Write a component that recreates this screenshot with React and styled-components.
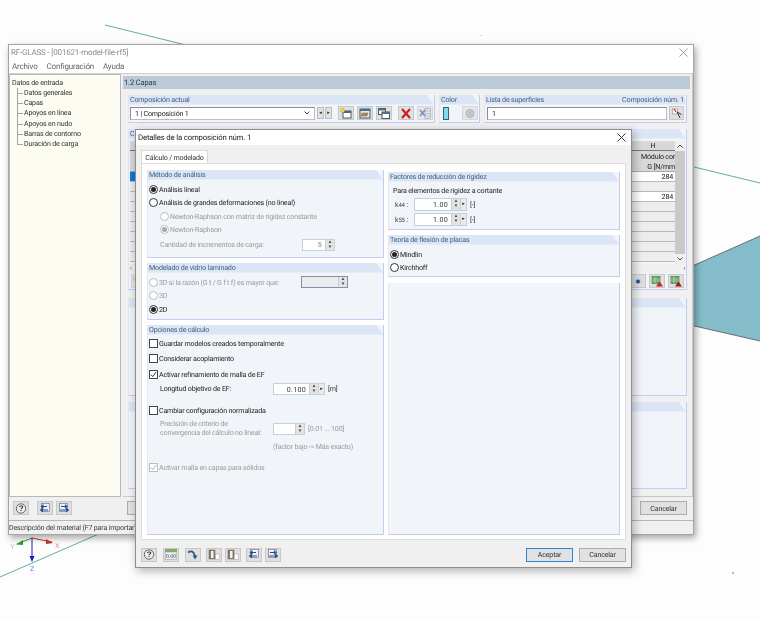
import styled, { createGlobalStyle } from 'styled-components';

const GlobalStyle = createGlobalStyle`
  html, body {
    margin: 0;
    padding: 0;
    background: #fdfdfd;
  }
  * {
    box-sizing: border-box;
  }
`;

const Stage = styled.div`
  position: relative;
  width: 760px;
  height: 620px;
  overflow: hidden;
  background: #fdfdfd;
  font-family: Roboto, 'Liberation Sans', Arial, sans-serif;
  font-size: 7.1px;
  letter-spacing: -0.18px;
  text-rendering: geometricPrecision;
  color: #222;
  filter: blur(0.35px);
`;

const Backdrop = styled.svg`
  position: absolute;
  inset: 0;
`;

const MainWindow = styled.div`
  position: absolute;
  left: 8px;
  top: 44px;
  width: 686px;
  height: 491px;
  display: flex;
  flex-direction: column;
  background: #f0f0f0;
  border: 1px solid #a5a5a5;
  box-shadow: 2px 3px 7px rgba(0, 0, 0, 0.35);
`;

const TitleBar = styled.div`
  height: 15px;
  flex: none;
  display: flex;
  align-items: center;
  justify-content: space-between;
  padding: 0 5px 0 2px;
  background: #fff;
  color: ${(p) => (p.$dim ? '#8d8d8d' : '#222')};
  font-size: ${(p) => (p.$dim ? '8px' : '7.8px')};
`;

const CloseGlyph = styled.svg`
  width: 9px;
  height: 9px;
  stroke: ${(p) => (p.$dim ? '#9a9a9a' : '#333')};
  stroke-width: 1;
  fill: none;
`;

const MenuBar = styled.div`
  height: 13px;
  flex: none;
  display: flex;
  gap: 9px;
  align-items: center;
  padding: 0 3px;
  background: #fff;
  color: #666;
  font-size: 8px;
`;

const MainBody = styled.div`
  flex: 1;
  display: flex;
  gap: 2px;
  min-height: 0;
  border-top: 1px solid #d0d0d0;
`;

const Tree = styled.div`
  width: 112px;
  flex: none;
  padding: 3px 2px;
  background: #fcfcf2;
  border: 1px solid #b9b9b9;
  line-height: 10.15px;
  color: #333;
`;

const TreeChildren = styled.div`
  position: relative;
  padding-left: 12px;
  &::before {
    content: '';
    position: absolute;
    left: 5px;
    top: 0;
    height: 56px;
    border-left: 1px solid #a5a5a5;
  }
`;

const TreeItem = styled.div`
  position: relative;
  &::before {
    content: '';
    position: absolute;
    left: -7px;
    top: 5px;
    width: 6px;
    border-top: 1px solid #a5a5a5;
  }
`;

const RightPane = styled.div`
  flex: 1;
  min-width: 0;
  padding: 2px 2px 2px 0;
  display: flex;
  flex-direction: column;
  border-right: 1px solid #c8c8c8;
  border-bottom: 1px solid #c8c8c8;
`;

const PaneHeader = styled.div`
  height: 13px;
  flex: none;
  padding-left: 1px;
  line-height: 13px;
  background: #bccad8;
  color: #2e3c4a;
  font-size: 7.6px;
`;

const PaneContent = styled.div`
  flex: 1;
  padding: 6px 3px 0 5px;
  display: flex;
  flex-direction: column;
  gap: 6px;
`;

const TopRow = styled.div`
  display: flex;
  gap: 4px;
  height: 28px;
  flex: none;
`;

const Group = styled.div`
  position: relative;
  display: flex;
  flex-direction: column;
  height: ${(p) => (p.$h ? `${p.$h}px` : 'auto')};
  width: ${(p) => (p.$w ? `${p.$w}px` : 'auto')};
  flex: ${(p) => (p.$grow ? '1' : 'none')};
  margin-top: ${(p) => p.$mt || 0}px;
  background: #f1f4f9;
  border-right: 1px solid #c5cbee;
  border-bottom: 1px solid #c5cbee;
  border-left: 1px solid #e2e6f6;
`;

const GroupHead = styled.div`
  height: 9.5px;
  flex: none;
  display: flex;
  justify-content: space-between;
  padding: 0 2px 0 1px;
  line-height: 9.5px;
  background: #dbe5f5;
  clip-path: polygon(0 0, calc(100% - ${(p) => p.$corner || 7}px) 0, 100% 100%, 0 100%);
  color: #41617f;
  white-space: nowrap;
`;

const GroupBody = styled.div`
  flex: 1;
  min-height: 0;
  display: flex;
  flex-direction: ${(p) => (p.$row ? 'row' : 'column')};
  align-items: ${(p) => (p.$row ? 'center' : 'stretch')};
  gap: ${(p) => p.$gap || 0}px;
  padding: ${(p) => p.$pad || '0 2px'};
`;

const Combo = styled.div`
  width: 186px;
  height: 13px;
  display: flex;
  align-items: center;
  justify-content: space-between;
  padding: 0 4px;
  background: #fff;
  border: 1px solid #8c8c8c;
  border-right-color: #bdbdbd;
  border-bottom-color: #bdbdbd;
`;

const Stepper = styled.div`
  width: 7px;
  height: 12px;
  display: flex;
  align-items: center;
  justify-content: center;
  background: #e1e1e1;
  border: 1px solid #bdbdbd;
  color: #222;
  font-size: 5px;
`;

const StepPair = styled.div`
  display: flex;
  gap: 1px;
  margin: 0 6px 0 2px;
`;

const IconBtn = styled.div`
  width: ${(p) => p.$w || 16}px;
  height: 14px;
  flex: none;
  display: flex;
  align-items: center;
  justify-content: center;
  background: #dfdfdf;
  border: 1px solid #c8c8c8;
  opacity: ${(p) => (p.$off ? 0.65 : 1)};
  margin-right: ${(p) => p.$mr || 0}px;
  margin-left: ${(p) => p.$ml || 0}px;
  svg {
    display: block;
  }
`;

const Swatch = styled.div`
  width: 7px;
  height: 13px;
  margin: 0 13px 0 2px;
  background: #7be0ee;
  border: 1px solid #44606a;
`;

const TextField = styled.div`
  flex: 1;
  height: 13px;
  padding: 0 4px;
  line-height: 11px;
  background: #fff;
  border: 1px solid #8c8c8c;
  border-right-color: #bdbdbd;
  border-bottom-color: #bdbdbd;
`;

const LayerTable = styled.div`
  flex: 1;
  min-height: 0;
  display: flex;
  justify-content: space-between;
  padding: 2px 1px 0 1px;
`;

const TableStub = styled.div`
  width: 9px;
  display: flex;
  flex-direction: column;
`;

const TableRight = styled.div`
  width: 54px;
  display: flex;
`;

const ValueCol = styled.div`
  width: 44px;
  display: flex;
  flex-direction: column;
`;

const ColLetter = styled.div`
  height: 10px;
  flex: none;
  text-align: center;
  line-height: 10px;
  background: #d8d8d8;
  border-bottom: 1px solid #777;
`;

const ColTitle = styled.div`
  height: 21px;
  flex: none;
  padding-top: 1px;
  text-align: right;
  line-height: 10px;
  overflow: hidden;
  white-space: nowrap;
  background: #d8d8d8;
  border-bottom: 1px solid #aaa;
`;

const Cell = styled.div`
  height: ${(p) => p.$h || 10}px;
  flex: none;
  padding-right: 2px;
  text-align: right;
  line-height: 9px;
  background: ${(p) => p.$bg || '#ededed'};
  border-bottom: 1px solid #b9b9b9;
`;

const VScroll = styled.div`
  width: 10px;
  display: flex;
  flex-direction: column;
  align-items: center;
  background: #f0f0f0;
  color: #444;
  svg {
    display: block;
    flex: none;
    margin: 3px 0;
  }
`;

const VThumb = styled.div`
  width: 100%;
  flex: 1;
  background: #c9c9c9;
`;

const HScroll = styled.div`
  height: 9px;
  flex: none;
  display: flex;
  justify-content: space-between;
  align-items: center;
  padding: 0 1px;
  color: #444;
  font-size: 6px;
  background: #f0f0f0;
`;

const TableTools = styled.div`
  height: 16px;
  flex: none;
  display: flex;
  justify-content: space-between;
  align-items: center;
  padding: 0 2px;
`;

const ToolsEnd = styled.div`
  display: flex;
  gap: 3px;
`;

const MainFooter = styled.div`
  height: 23px;
  flex: none;
  display: flex;
  align-items: center;
  padding: 0 6px 1px 4px;
  gap: 3px;
`;

const Spacer = styled.div`
  flex: 1;
`;

const PushBtn = styled.div`
  width: ${(p) => p.$w || 47}px;
  height: 14px;
  display: flex;
  align-items: center;
  justify-content: center;
  background: #e1e1e1;
  border: ${(p) => (p.$primary ? '1px solid #2b83d6' : '1px solid #adadad')};
  color: #333;
  margin-left: ${(p) => p.$ml || 0}px;
`;

const StatusBar = styled.div`
  height: 14px;
  flex: none;
  line-height: 13px;
  border-top: 1px solid #b5b5b5;
  background: #f0f0f0;
  color: #3a3a3a;
  white-space: nowrap;
`;

const Dialog = styled.div`
  position: absolute;
  left: 135px;
  top: 129px;
  width: 497px;
  height: 439px;
  display: flex;
  flex-direction: column;
  background: #f0f0f0;
  border: 1px solid #8e8e8e;
  box-shadow: 2px 3px 9px rgba(0, 0, 0, 0.3);
`;

const Tabs = styled.div`
  height: 18px;
  flex: none;
  display: flex;
  align-items: flex-end;
  padding: 5px 0 0 5px;
`;

const Tab = styled.div`
  width: 67px;
  height: 13px;
  text-align: center;
  line-height: 13px;
  white-space: nowrap;
  background: #fff;
  border: 1px solid #d9d9d9;
  border-bottom: none;
  color: #333;
`;

const TabPage = styled.div`
  margin: 0 5px;
  height: 377px;
  flex: none;
  display: grid;
  grid-template-columns: 237px 232px;
  column-gap: 4px;
  padding: 6px 5px 4px 5px;
  background: #fff;
  border: 1px solid #dcdcdc;
`;

const Column = styled.div`
  display: flex;
  flex-direction: column;
  gap: ${(p) => p.$gap}px;
  padding-top: ${(p) => p.$top || 0}px;
  min-height: 0;
`;

const Line = styled.div`
  height: ${(p) => p.$h || 13}px;
  flex: none;
  display: flex;
  align-items: center;
  padding-left: ${(p) => p.$indent || 0}px;
  color: ${(p) => (p.$off ? '#9a9a9a' : '#222')};
  white-space: nowrap;
  margin-top: ${(p) => p.$mt || 0}px;
`;

const Radio = styled.span`
  width: 9px;
  height: 9px;
  flex: none;
  margin-right: 1px;
  display: flex;
  align-items: center;
  justify-content: center;
  border-radius: 50%;
  background: #fff;
  border: 1px solid ${(p) => (p.$off ? '#bdbdbd' : '#333')};
  &::after {
    content: '';
    width: 5px;
    height: 5px;
    border-radius: 50%;
    background: ${(p) => (p.$on ? (p.$off ? '#a8a8a8' : '#222') : 'transparent')};
  }
`;

const Check = styled.span`
  width: 9px;
  height: 9px;
  flex: none;
  margin-right: 1px;
  background: #fff;
  border: 1px solid ${(p) => (p.$off ? '#bdbdbd' : '#444')};
  color: ${(p) => (p.$off ? '#aaa' : '#333')};
  svg {
    display: block;
  }
`;

const Spin = styled.div`
  width: ${(p) => p.$w}px;
  height: ${(p) => p.$h || 12}px;
  flex: none;
  display: flex;
  background: ${(p) => (p.$off ? '#ececec' : '#fff')};
  border: 1px solid ${(p) => (p.$dark ? '#7d93ab' : '#c3d0de')};
`;

const SpinValue = styled.div`
  flex: 1;
  padding-right: 3px;
  text-align: right;
  line-height: ${(p) => p.$lh || 10}px;
  color: ${(p) => (p.$off ? '#777' : '#333')};
  letter-spacing: 0.3px;
`;

const SpinArrows = styled.div`
  width: 9px;
  flex: none;
  display: flex;
  flex-direction: column;
  align-items: center;
  justify-content: center;
  background: #e3e3e3;
  border-left: 1px solid #cfcfcf;
  color: #444;
  font-size: 4.5px;
  line-height: 5px;
`;

const SpinNext = styled.div`
  width: 6px;
  flex: none;
  display: flex;
  align-items: center;
  justify-content: center;
  background: #eaeaea;
  border-left: 1px solid #cfcfcf;
  color: #222;
  font-size: 5px;
`;

const Unit = styled.span`
  margin-left: 3px;
  color: ${(p) => (p.$off ? '#9a9a9a' : '#333')};
`;

const KLabel = styled.span`
  width: 21px;
  flex: none;
  padding-left: 2px;
  color: #444;
  sub {
    font-size: 6px;
    vertical-align: baseline;
  }
`;

const LeadLabel = styled.span`
  width: ${(p) => p.$w}px;
  flex: none;
`;

const NoteBlock = styled.div`
  width: 113px;
  flex: none;
  line-height: 8.6px;
  color: #9a9a9a;
  white-space: nowrap;
`;

const DialogFooter = styled.div`
  flex: 1;
  display: flex;
  align-items: center;
  padding: 2px 5px 0 5px;
`;

const TreeNames = ['Datos generales', 'Capas', 'Apoyos en línea', 'Apoyos en nudo', 'Barras de contorno', 'Duración de carga'];

const Close = ({ dim }) => (
  <CloseGlyph $dim={dim} viewBox="0 0 9 9">
    <path d="M0.5 0.5 L8.5 8.5 M8.5 0.5 L0.5 8.5" />
  </CloseGlyph>
);

const Ico = ({ children }) => (
  <svg width="12" height="11" viewBox="0 0 12 11">
    {children}
  </svg>
);

const NewIcon = () => (
  <Ico>
    <rect x="3" y="3" width="8" height="7" fill="#fff" stroke="#555" />
    <rect x="3" y="3" width="8" height="2" fill="#3c6c8c" />
    <circle cx="2.5" cy="2.5" r="2" fill="#f2d94a" stroke="#b09a20" strokeWidth="0.5" />
  </Ico>
);

const CopyIcon = () => (
  <Ico>
    <rect x="1" y="1" width="10" height="9" fill="#e8e8e8" stroke="#555" />
    <rect x="1" y="1" width="10" height="2" fill="#4a7090" />
    <path d="M3 5 h6 l-1 3 h-6 z" fill="#b08a5a" stroke="#6a5030" strokeWidth="0.4" />
  </Ico>
);

const WindowsIcon = () => (
  <Ico>
    <rect x="0.5" y="0.5" width="7" height="6" fill="#fff" stroke="#555" />
    <rect x="0.5" y="0.5" width="7" height="2" fill="#4a7090" />
    <rect x="4" y="4" width="7.5" height="6.5" fill="#fff" stroke="#555" />
    <rect x="4" y="4" width="7.5" height="2" fill="#4a7090" />
  </Ico>
);

const DeleteIcon = () => (
  <Ico>
    <path d="M2 1 L10 10 M10 1 L2 10" stroke="#c8211d" strokeWidth="2.2" fill="none" />
  </Ico>
);

const GridIcon = () => (
  <Ico>
    <rect x="6" y="0.5" width="5.5" height="10" fill="#ddd" stroke="#888" strokeWidth="0.7" />
    <path d="M6 3 h5.5 M6 5.5 h5.5 M6 8 h5.5" stroke="#888" strokeWidth="0.6" />
    <path d="M1 2 L6 8 M6 2 L1 8" stroke="#3a5ab0" strokeWidth="1.6" />
  </Ico>
);

const PartIcon = () => (
  <Ico>
    <circle cx="6" cy="5.5" r="4" fill="#b8b8b8" stroke="#8f8f8f" />
    <path d="M4 3 L8 8 M8 3 L4 8" stroke="#8f8f8f" strokeWidth="0.8" />
  </Ico>
);

const PickIcon = () => (
  <Ico>
    <rect x="1.5" y="1" width="5" height="5" fill="#fff" stroke="#888" strokeWidth="0.6" />
    <path d="M3 1 L5 4" stroke="#c8211d" strokeWidth="1.2" />
    <path d="M6 4 L9 10 M6 4 L10.5 6.5" stroke="#333" strokeWidth="1" />
  </Ico>
);

const HelpIcon = () => (
  <Ico>
    <circle cx="6" cy="5.5" r="4.7" fill="#ededed" stroke="#666" />
    <text x="6" y="8.4" textAnchor="middle" fontSize="8" fontWeight="700" fontFamily="Liberation Sans" fill="#333">?</text>
  </Ico>
);

const TableIcon = () => (
  <Ico>
    <rect x="0" y="0" width="12" height="3" fill="#7fae6a" />
    <rect x="0.5" y="3" width="11" height="7.5" fill="#eee" stroke="#999" strokeWidth="0.5" />
    <text x="6" y="9" textAnchor="middle" fontSize="5.4" fontFamily="Liberation Sans" fill="#345">0.00</text>
  </Ico>
);

const CurveIcon = () => (
  <Ico>
    <path d="M1 3.5 Q6 0 8 7" stroke="#2c5c84" strokeWidth="1.7" fill="none" />
    <path d="M5.5 6.5 L10.5 6.5 L8 10.5 Z" fill="#2c5c84" />
  </Ico>
);

const PagesIcon = () => (
  <Ico>
    <rect x="1" y="1" width="6" height="9" fill="#8a7c66" stroke="#666" strokeWidth="0.5" />
    <rect x="3" y="2" width="2.5" height="7" fill="#f2f2f2" />
    <rect x="7.5" y="5" width="4" height="5.5" fill="#fff" stroke="#999" strokeWidth="0.5" />
  </Ico>
);

const ArrowBack = () => (
  <Ico>
    <rect x="2.5" y="0.5" width="8" height="8" fill="#eef" stroke="#667" strokeWidth="0.6" />
    <path d="M8 3.5 H3 M4.5 1.8 L2.5 3.5 L4.5 5.2 M3 7 H9" stroke="#1d4f8c" strokeWidth="1.2" fill="none" />
    <path d="M0.5 7 L4 4.8 V9.2 Z" fill="#1d4f8c" />
  </Ico>
);

const ArrowForward = () => (
  <Ico>
    <rect x="1.5" y="0.5" width="8" height="8" fill="#eef" stroke="#667" strokeWidth="0.6" />
    <path d="M3 3.5 H8 M7 1.8 L9 3.5 L7 5.2 M2 7 H8" stroke="#1d4f8c" strokeWidth="1.2" fill="none" />
    <path d="M11.5 7 L8 4.8 V9.2 Z" fill="#1d4f8c" />
  </Ico>
);

const ExportIcon = ({ color }) => (
  <Ico>
    <rect x="1" y="0.5" width="8" height="7" fill="#67a869" stroke="#3d6d3f" strokeWidth="0.6" />
    <path d="M1 3 h8 M1 5 h8 M4 0.5 v7" stroke="#d6ecd6" strokeWidth="0.5" />
    <path d="M5 10.5 L8.5 5.5 L12 10.5 Z" fill={color} />
  </Ico>
);

const EyeIcon = () => (
  <Ico>
    <ellipse cx="6" cy="5.5" rx="5" ry="3" fill="#cfd8e6" />
    <circle cx="6" cy="5.5" r="2" fill="#2a4f9c" />
  </Ico>
);

const Tick = () => (
  <svg width="7" height="7" viewBox="0 0 7 7">
    <path d="M0.8 3.6 L2.8 5.6 L6.2 0.9" stroke="currentColor" strokeWidth="1" fill="none" />
  </svg>
);

const Chevron = ({ up }) => (
  <svg width="6" height="4" viewBox="0 0 6 4">
    <path d={up ? 'M0.5 3.5 L3 1 L5.5 3.5' : 'M0.5 0.5 L3 3 L5.5 0.5'} stroke="#444" fill="none" />
  </svg>
);

const Arrows = () => (
  <SpinArrows>
    <span>▲</span>
    <span>▼</span>
  </SpinArrows>
);

const Analisis = () => (
  <Group $h={88}>
    <GroupHead>Método de análisis</GroupHead>
    <GroupBody $pad="3px 1px 0 1px">
      <Line><Radio $on />Análisis lineal</Line>
      <Line $mt={0.5}><Radio />Análisis de grandes deformaciones (no lineal)</Line>
      <Line $indent={11} $off $mt={0.5}><Radio $off />Newton-Raphson con matriz de rigidez constante</Line>
      <Line $indent={11} $off $mt={0.5}><Radio $on $off />Newton-Raphson</Line>
      <Line $indent={11} $off $mt={2}>
        <LeadLabel $w={142}>Cantidad de incrementos de carga:</LeadLabel>
        <Spin $w={33}>
          <SpinValue $off>5</SpinValue>
          <Arrows />
        </Spin>
      </Line>
    </GroupBody>
  </Group>
);

const Vidrio = () => (
  <Group $h={57}>
    <GroupHead>Modelado de vidrio laminado</GroupHead>
    <GroupBody $pad="3px 1px 0 1px">
      <Line $off>
        <Radio $off /><LeadLabel $w={142}>3D si la razón (G t / G f t f) es mayor que:</LeadLabel>
        <Spin $w={47} $off $dark>
          <SpinValue />
          <Arrows />
        </Spin>
      </Line>
      <Line $off $mt={0.5}><Radio $off />3D</Line>
      <Line $mt={0.5}><Radio $on />2D</Line>
    </GroupBody>
  </Group>
);

const Opciones = () => (
  <Group $grow>
    <GroupHead>Opciones de cálculo</GroupHead>
    <GroupBody $pad="2.5px 1px 0 1px">
      <Line><Check />Guardar modelos creados temporalmente</Line>
      <Line $mt={2.3}><Check />Considerar acoplamiento</Line>
      <Line $mt={2.3}><Check><Tick /></Check>Activar refinamiento de malla de EF</Line>
      <Line $mt={1.5} $indent={11}>
        <LeadLabel $w={113}>Longitud objetivo de EF:</LeadLabel>
        <Spin $w={52}>
          <SpinValue $lh={11}>0.100</SpinValue>
          <Arrows />
          <SpinNext>▸</SpinNext>
        </Spin>
        <Unit>[m]</Unit>
      </Line>
      <Line $mt={8.5}><Check />Cambiar configuración normalizada</Line>
      <Line $h={20} $mt={2} $indent={11}>
        <NoteBlock>Precisión de criterio de<br />convergencia del cálculo no lineal:</NoteBlock>
        <Spin $w={32}>
          <SpinValue />
          <Arrows />
        </Spin>
        <Unit $off>[0.01 ... 100]</Unit>
      </Line>
      <Line $h={10} $mt={2.5} $indent={124} $off>(factor bajo -&gt; Más exacto)</Line>
      <Line $mt={9.5} $off><Check $off><Tick /></Check>Activar malla en capas para sólidos</Line>
    </GroupBody>
  </Group>
);

const Rigidez = () => (
  <Group $h={58}>
    <GroupHead>Factores de reducción de rigidez</GroupHead>
    <GroupBody $pad="3px 2px 0 4px">
      <Line $h={12}>Para elementos de rigidez a cortante</Line>
      <Line $h={15}>
        <KLabel>k<sub>44</sub> :</KLabel>
        <Spin $w={53} $h={13}>
          <SpinValue $lh={11}>1.00</SpinValue>
          <Arrows />
          <SpinNext>▸</SpinNext>
        </Spin>
        <Unit>[-]</Unit>
      </Line>
      <Line $h={15}>
        <KLabel>k<sub>55</sub> :</KLabel>
        <Spin $w={53} $h={13}>
          <SpinValue $lh={11}>1.00</SpinValue>
          <Arrows />
          <SpinNext>▸</SpinNext>
        </Spin>
        <Unit>[-]</Unit>
      </Line>
    </GroupBody>
  </Group>
);

const Flexion = () => (
  <Group $h={42}>
    <GroupHead>Teoría de flexión de placas</GroupHead>
    <GroupBody $pad="3px 2px 0 1px">
      <Line><Radio $on />Mindlin</Line>
      <Line $mt={0.5}><Radio />Kirchhoff</Line>
    </GroupBody>
  </Group>
);

export default function App() {
  return (
    <Stage>
      <GlobalStyle />
      <Backdrop width="760" height="620" viewBox="0 0 760 620">
        <path d="M105 25 L190 46" stroke="#5cb0a8" strokeWidth="1" fill="none" />
        <path d="M690 166 L760 183" stroke="#5cb0a8" strokeWidth="1" fill="none" />
        <path d="M0 577 L140 516" stroke="#5cb0a8" strokeWidth="1" fill="none" />
        <path d="M690 267 L760 236 V341 L690 325 Z" fill="#84bdc9" />
        <path d="M690 267 L760 236 M690 325 L760 341" stroke="#444" strokeWidth="0.7" fill="none" />
        <rect x="481" y="35" width="1" height="1" fill="#aaa" />
        <rect x="732" y="572" width="2" height="2" fill="#bbb" />
        <path d="M32 538 L52 542" stroke="#d03030" strokeWidth="1" />
        <path d="M53 543 L46 539 L46 544 Z" fill="#d03030" />
        <path d="M32 538 L17 544" stroke="#2ca02c" strokeWidth="1" />
        <path d="M16 544.5 L23 540 L23 545 Z" fill="#2ca02c" />
        <path d="M32 538 V560" stroke="#1c1cb8" strokeWidth="1" />
        <path d="M32 562 L29.5 556 H34.5 Z" fill="#1c1cb8" />
        <text x="55" y="548" fontSize="7" fontFamily="Liberation Sans" fill="#f08080">X</text>
        <text x="10" y="549" fontSize="7" fontFamily="Liberation Sans" fill="#90d890">Y</text>
        <text x="30" y="571" fontSize="7" fontFamily="Liberation Sans" fill="#7070e0">Z</text>
      </Backdrop>

      <MainWindow>
        <TitleBar $dim>
          RF-GLASS - [001621-model-file-rf5]
          <Close dim />
        </TitleBar>
        <MenuBar>
          <span>Archivo</span>
          <span>Configuración</span>
          <span>Ayuda</span>
        </MenuBar>
        <MainBody>
          <Tree>
            <div>Datos de entrada</div>
            <TreeChildren>
              {TreeNames.map((name) => (
                <TreeItem key={name}>{name}</TreeItem>
              ))}
            </TreeChildren>
          </Tree>
          <RightPane>
            <PaneHeader>1.2 Capas</PaneHeader>
            <PaneContent>
              <TopRow>
                <Group $w={307}>
                  <GroupHead>Composición actual</GroupHead>
                  <GroupBody $row $pad="0 1px">
                    <Combo>
                      1 | Composición 1
                      <Chevron />
                    </Combo>
                    <StepPair>
                      <Stepper>◂</Stepper>
                      <Stepper>▸</Stepper>
                    </StepPair>
                    <IconBtn $mr={3}><NewIcon /></IconBtn>
                    <IconBtn $mr={3}><CopyIcon /></IconBtn>
                    <IconBtn $mr={6}><WindowsIcon /></IconBtn>
                    <IconBtn $mr={3}><DeleteIcon /></IconBtn>
                    <IconBtn $off><GridIcon /></IconBtn>
                  </GroupBody>
                </Group>
                <Group $w={41}>
                  <GroupHead>Color</GroupHead>
                  <GroupBody $row $pad="0 1px">
                    <Swatch />
                    <IconBtn $off><PartIcon /></IconBtn>
                  </GroupBody>
                </Group>
                <Group $grow>
                  <GroupHead $corner={2}>
                    <span>Lista de superficies</span>
                    <span>Composición núm. 1</span>
                  </GroupHead>
                  <GroupBody $row $gap={2} $pad="0 2px">
                    <TextField>1</TextField>
                    <IconBtn $w={15}><PickIcon /></IconBtn>
                  </GroupBody>
                </Group>
              </TopRow>
              <Group $h={161}>
                <GroupHead>Capas</GroupHead>
                <LayerTable>
                  <TableStub>
                    <ColLetter />
                    <ColTitle>C</ColTitle>
                    <Cell $bg="#0a78d8" />
                    <Cell />
                    <Cell />
                    <Cell />
                    <Cell />
                    <Cell />
                    <Cell />
                    <Cell />
                    <Cell />
                  </TableStub>
                  <TableRight>
                    <ValueCol>
                      <ColLetter>H</ColLetter>
                      <ColTitle>Módulo cor<br />G [N/mm</ColTitle>
                      <Cell $bg="#fff">284</Cell>
                      <Cell />
                      <Cell $bg="#fff">284</Cell>
                      <Cell />
                      <Cell />
                      <Cell />
                      <Cell />
                      <Cell />
                      <Cell />
                    </ValueCol>
                    <VScroll>
                      <Chevron up />
                      <VThumb />
                      <Chevron />
                    </VScroll>
                  </TableRight>
                </LayerTable>
                <HScroll>
                  <span>‹</span>
                  <span>›</span>
                </HScroll>
                <TableTools>
                  <IconBtn $off><NewIcon /></IconBtn>
                  <ToolsEnd>
                    <IconBtn><EyeIcon /></IconBtn>
                    <IconBtn><ExportIcon color="#d02020" /></IconBtn>
                    <IconBtn><ExportIcon color="#b01818" /></IconBtn>
                  </ToolsEnd>
                </TableTools>
              </Group>
              <Group $h={98} $mt={2}>
                <GroupHead />
              </Group>
              <Group $h={87}>
                <GroupHead />
              </Group>
            </PaneContent>
          </RightPane>
        </MainBody>
        <MainFooter>
          <IconBtn><HelpIcon /></IconBtn>
          <IconBtn $ml={5}><ArrowBack /></IconBtn>
          <IconBtn><ArrowForward /></IconBtn>
          <PushBtn $ml={52} $w={47} />
          <Spacer />
          <PushBtn>Cancelar</PushBtn>
        </MainFooter>
        <StatusBar>Descripción del material (F7 para importar)</StatusBar>
      </MainWindow>

      <Dialog>
        <TitleBar>
          Detalles de la composición núm. 1
          <Close />
        </TitleBar>
        <Tabs>
          <Tab>Cálculo / modelado</Tab>
        </Tabs>
        <TabPage>
          <Column $gap={5}>
            <Analisis />
            <Vidrio />
            <Opciones />
          </Column>
          <Column $gap={5} $top={2}>
            <Rigidez />
            <Flexion />
            <Group $grow $mt={1} />
          </Column>
        </TabPage>
        <DialogFooter>
          <IconBtn $mr={6}><HelpIcon /></IconBtn>
          <IconBtn $mr={6}><TableIcon /></IconBtn>
          <IconBtn $mr={5}><CurveIcon /></IconBtn>
          <IconBtn $mr={3}><PagesIcon /></IconBtn>
          <IconBtn $mr={5}><PagesIcon /></IconBtn>
          <IconBtn $mr={3}><ArrowBack /></IconBtn>
          <IconBtn><ArrowForward /></IconBtn>
          <Spacer />
          <PushBtn $primary>Aceptar</PushBtn>
          <PushBtn $ml={6}>Cancelar</PushBtn>
        </DialogFooter>
      </Dialog>
    </Stage>
  );
}
